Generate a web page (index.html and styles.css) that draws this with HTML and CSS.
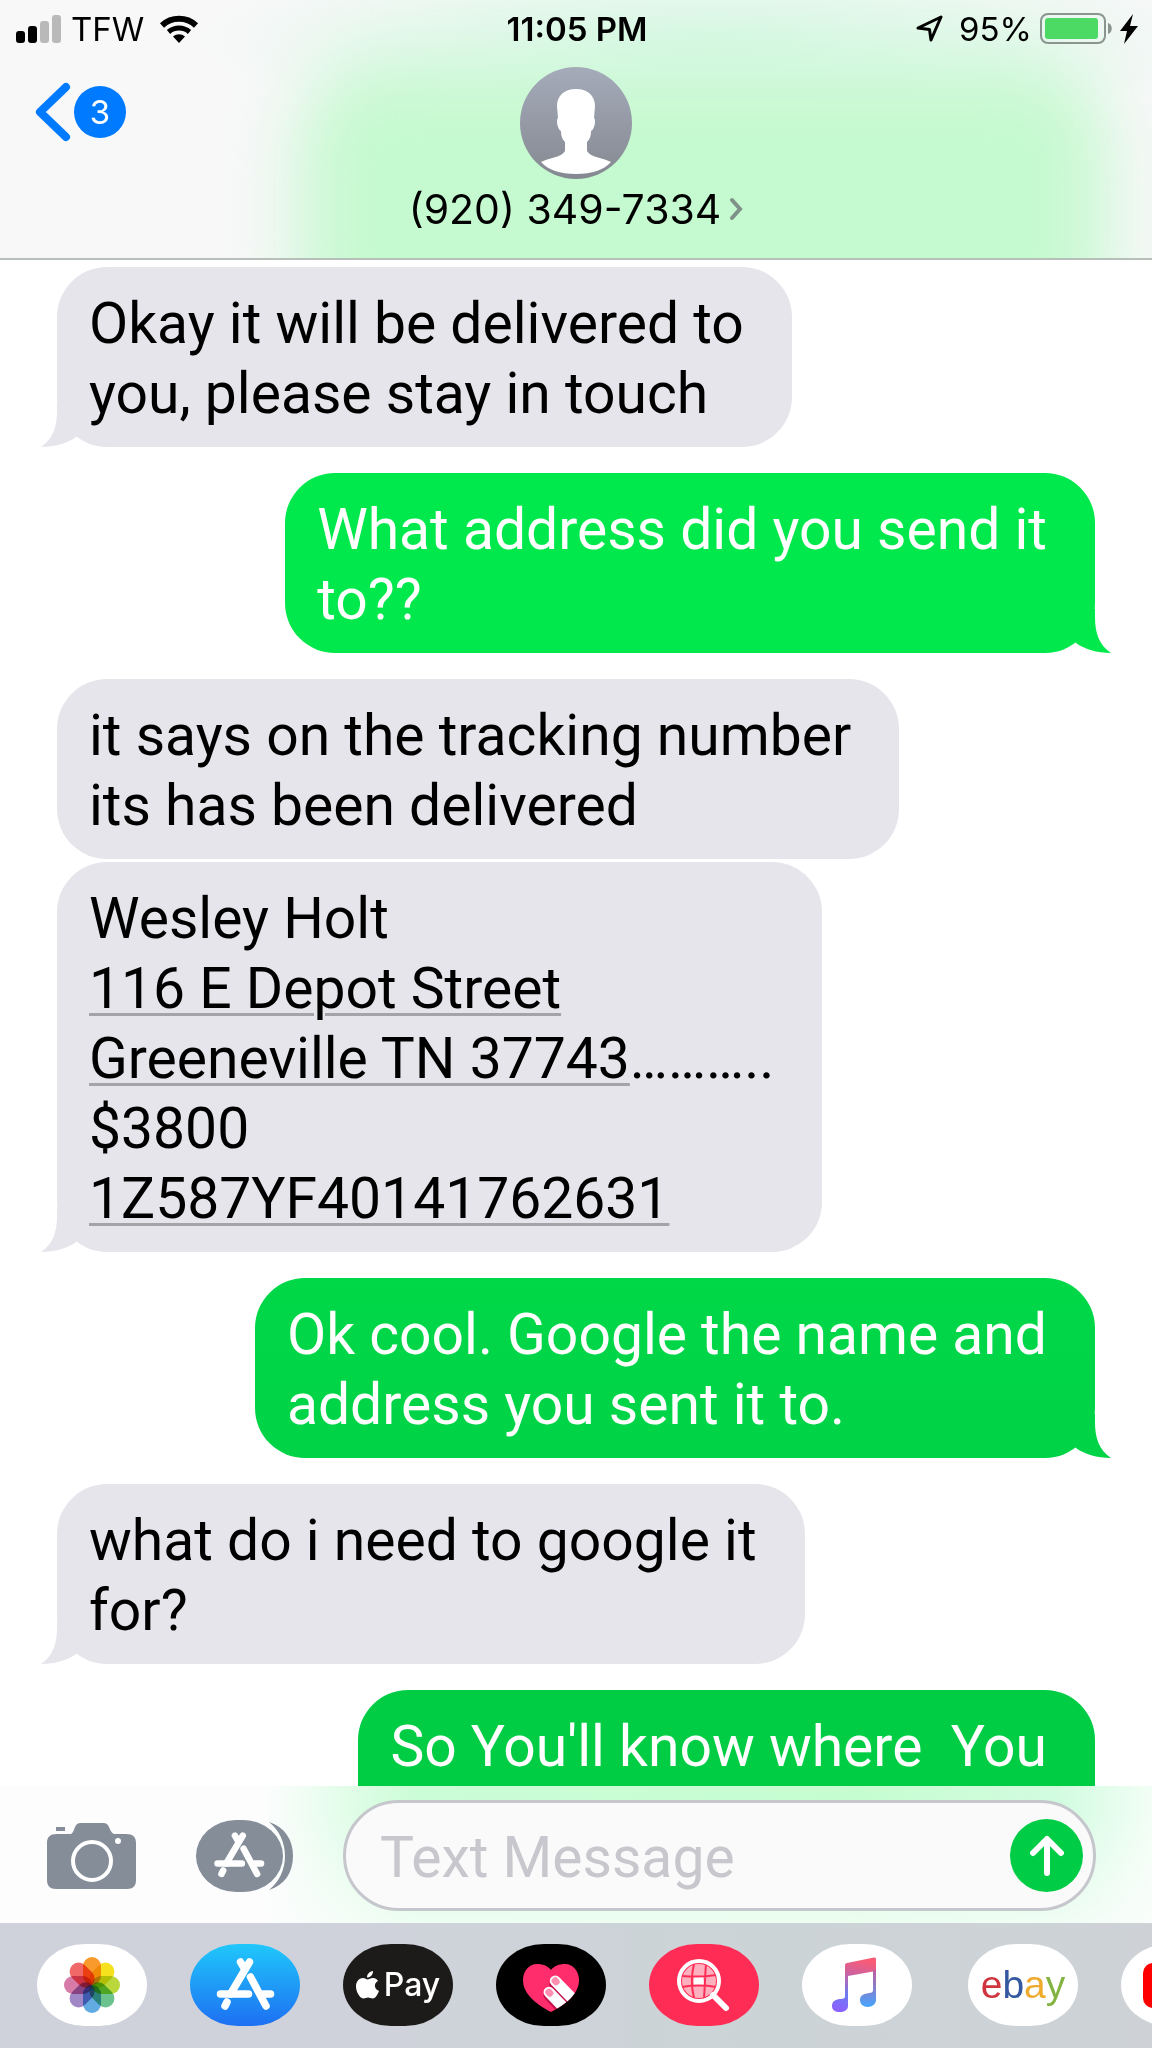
FILE: index.html
```html
<!DOCTYPE html>
<html lang="en">
<head>
  <meta charset="UTF-8">
  <meta name="viewport" content="width=device-width, initial-scale=1">
  <title>Messages</title>
  <link rel="stylesheet" href="styles.css">
</head>
<body>
<header class="header">
  <div class="status-bar">
    <div class="status-left">
      <svg width="45" height="28" viewBox="0 0 45 28">
        <rect x="0" y="16" width="9" height="12" rx="3"/>
        <rect x="12" y="11" width="9" height="17" rx="3"/>
        <rect x="24" y="6" width="9" height="22" rx="3" fill="#b9b9ba"/>
        <rect x="36" y="0" width="9" height="28" rx="3" fill="#b9b9ba"/>
      </svg>
      <span class="carrier">TFW</span>
      <svg class="wifi" width="40" height="28" viewBox="0 0 40 28">
        <path d="M3 10.500A25 25 0 0 1 37 10.500" fill="none" stroke="#000" stroke-width="6"/>
        <path d="M9.500 17A16 16 0 0 1 30.500 17" fill="none" stroke="#000" stroke-width="5"/>
        <path d="M20 28l-6-6.500a9 9 0 0 1 12 0z"/>
      </svg>
    </div>
    <time class="clock">11:05 PM</time>
    <div class="status-right">
      <svg width="27" height="28" viewBox="0 0 27 28">
        <path d="M25 2L15 25l-1.500-10.500L2 13z" fill="none" stroke="#000" stroke-width="3" stroke-linejoin="round"/>
      </svg>
      <span class="percent">95%</span>
      <svg width="73" height="32" viewBox="0 0 73 32">
        <rect x="1" y="1" width="64" height="29" rx="7" fill="none" stroke="#8a9590" stroke-width="2"/>
        <rect x="5" y="5" width="53" height="21" rx="3" fill="#4cd964"/>
        <path d="M68 10c5 1 5 10 0 11z" fill="#8a9590"/>
      </svg>
      <svg class="bolt" width="18" height="30" viewBox="0 0 18 30">
        <path d="M13 0L0 17h7L4 30 18 12h-8z"/>
      </svg>
    </div>
  </div>
  <nav class="nav">
    <a class="back" href="#" aria-label="Back to conversations">
      <svg width="36" height="60" viewBox="0 0 36 60">
        <path d="M31 5L5 30l26 25" fill="none" stroke="#007aff" stroke-width="8" stroke-linecap="round" stroke-linejoin="round"/>
      </svg>
      <span class="badge">3</span>
    </a>
    <a class="contact" href="#">
      <svg class="avatar" width="112" height="112" viewBox="0 0 112 112">
        <defs>
          <linearGradient id="avatarFill" x1="0" y1="0" x2="0" y2="1">
            <stop offset="0" stop-color="#a5abb9"/>
            <stop offset="1" stop-color="#848991"/>
          </linearGradient>
        </defs>
        <circle cx="56" cy="56" r="56" fill="url(#avatarFill)"/>
        <path d="M56 22C44 22 37 29 37 39l1 12c-2 1-1 11 3 13 0 5 1 8 4 11v9c-4 7-15 6-24 11 7 8 19 12 35 12s28-4 35-12c-9-5-20-4-24-11v-9c3-3 4-6 4-11 4-2 5-12 3-13l1-12c0-10-7-17-19-17z" fill="#fff"/>
      </svg>
      <span class="contact-name">(920) 349-7334
        <svg width="14" height="24" viewBox="0 0 14 24">
          <path d="M3 3l8 9-8 9" fill="none" stroke="#7f9188" stroke-width="4" stroke-linecap="round"/>
        </svg>
      </span>
    </a>
  </nav>
</header>

<main class="messages">
  <p class="bubble received tail">Okay it will be delivered to<br>you, please stay in touch</p>
  <p class="bubble sent tail">What address did you send it<br>to??</p>
  <p class="bubble received">it says on the tracking number<br>its has been delivered</p>
  <p class="bubble received tail grouped">Wesley Holt<br><a href="#">116 E Depot Street</a><br><a href="#">Greeneville TN 37743</a>………..<br>$3800<br><a href="#">1Z587YF40141762631</a></p>
  <p class="bubble sent tail">Ok cool. Google the name and<br>address you sent it to.</p>
  <p class="bubble received tail">what do i need to google it<br>for?</p>
  <p class="bubble sent continued">So You'll know where&nbsp; You</p>
</main>

<form class="composer">
  <button class="icon-button" type="button" aria-label="Camera">
    <svg width="90" height="68" viewBox="0 0 90 68">
      <path d="M10 12h14c4-2 3-11 9-11h24c6 0 5 9 10 11h12c7 0 10 3 10 9v37c0 6-3 9-9 9H9c-6 0-9-3-9-9V21c0-6 3-9 10-9z" fill="#858d99"/>
      <rect x="9" y="5" width="9" height="4" fill="#858d99"/>
      <circle cx="45" cy="39" r="19" fill="none" stroke="#fff" stroke-width="4"/>
      <circle cx="71" cy="19" r="3" fill="#fff"/>
    </svg>
  </button>
  <button class="icon-button" type="button" aria-label="Apps">
    <svg width="98" height="72" viewBox="0 0 98 72">
      <path d="M73 2c16 5 24 18 24 34S89 65 73 70c10-8 16-20 16-34S83 10 73 2z" fill="#858d99"/>
      <rect width="87" height="72" rx="40" ry="36" fill="#858d99"/>
      <use href="#storeMark" transform="translate(-5 0) scale(.87)"/>
    </svg>
  </button>
  <div class="field">
    <input class="message-input" type="text" placeholder="Text Message" aria-label="Text Message">
    <button class="send" type="submit" aria-label="Send">
      <svg width="36" height="42" viewBox="0 0 36 42">
        <path d="M18 38V5M4 18L18 4l14 14" fill="none" stroke="#fff" stroke-width="6" stroke-linecap="round" stroke-linejoin="round"/>
      </svg>
    </button>
  </div>
</form>

<nav class="app-strip" aria-label="Message apps">
  <button class="app" type="button" aria-label="Photos">
    <svg class="petals" width="110" height="82" viewBox="0 0 110 82">
      <defs><rect id="petal" x="46" y="13" width="18" height="28" rx="9"/></defs>
      <use href="#petal" fill="#f99a2c"/>
      <use href="#petal" fill="#f5e11d" transform="rotate(45 55 41)"/>
      <use href="#petal" fill="#bad83c" transform="rotate(90 55 41)"/>
      <use href="#petal" fill="#6cc28c" transform="rotate(135 55 41)"/>
      <use href="#petal" fill="#62aae2" transform="rotate(180 55 41)"/>
      <use href="#petal" fill="#a088c6" transform="rotate(225 55 41)"/>
      <use href="#petal" fill="#d77ca8" transform="rotate(270 55 41)"/>
      <use href="#petal" fill="#f16868" transform="rotate(315 55 41)"/>
    </svg>
  </button>
  <button class="app app-store" type="button" aria-label="App Store">
    <svg width="110" height="82" viewBox="0 0 110 82">
      <defs>
        <g id="storeMark" fill="none" stroke="#fff" stroke-width="7.500" stroke-linecap="round">
          <path d="M59.500 18L40.500 50M50.500 18l4 7M37 58l-2 4M60.500 33L76 62"/>
          <path d="M30.500 50h28M73 50h7.500"/>
        </g>
      </defs>
      <use href="#storeMark"/>
    </svg>
  </button>
  <button class="app app-pay" type="button" aria-label="Apple Pay">
    <svg width="23" height="28" viewBox="0 0 23 28">
      <path d="M17 0c0 4-2.500 6.500-6 6.500C11 3 13.500 .5 17 0zM11.500 8.500C13 8.500 14.500 7 17 7c2 0 4 1 5 3-4.500 2.500-4 8 1 10-1.500 4-4 7.500-6 7.500S13.500 26.500 12 26.500 9 27.500 7.500 27.500C4 27.500 0 21 0 15.500 0 10 3.500 7 7 7c2 0 3.500 1.500 4.500 1.500z" fill="#fff"/>
    </svg>
    <span>Pay</span>
  </button>
  <button class="app app-touch" type="button" aria-label="Digital Touch">
    <svg width="110" height="82" viewBox="0 0 110 82">
      <defs>
        <clipPath id="heart"><path d="M55 68C42 61 27 51 27 36c0-9 6-16 14-16 6 0 11 2 14 6 3-4 8-6 14-6 8 0 14 7 14 16 0 15-15 25-28 32z"/></clipPath>
      </defs>
      <g clip-path="url(#heart)">
        <rect width="110" height="82" fill="#ff2d6b"/>
        <g transform="rotate(-44 60 37)">
          <path d="M54 37a6 6 0 0 1 12 0v40H54z" fill="#c3124c" transform="translate(-3 2)"/>
          <rect x="54" y="31" width="11" height="50" rx="5.500" fill="#fff"/>
          <rect x="56" y="33" width="7" height="8" rx="3" fill="#ff8fb0"/>
        </g>
        <g transform="rotate(-44 53 49)">
          <rect x="46" y="45" width="11" height="50" rx="5.500" fill="#c3124c"/>
          <rect x="48" y="43" width="11" height="50" rx="5.500" fill="#fff"/>
          <rect x="50" y="45" width="7" height="8" rx="3" fill="#ff8fb0"/>
        </g>
      </g>
    </svg>
  </button>
  <button class="app app-images" type="button" aria-label="Images">
    <svg width="110" height="82" viewBox="0 0 110 82">
      <circle cx="50" cy="37" r="17" fill="#ffb0bf"/>
      <path d="M45 33l9-1 1 9-10 1z" fill="#fff"/>
      <path d="M45 20c-3 12-3 22 0 34M57 20c-1 12-1 22-2 34M33 32c12 1 22 1 34-1M33 43c12-2 22-2 34 0" fill="none" stroke="#ff2d55" stroke-width="2"/>
      <circle cx="50" cy="37" r="20" fill="none" stroke="#fff" stroke-width="4"/>
      <path d="M64 51l13 13" stroke="#fff" stroke-width="6" stroke-linecap="round"/>
    </svg>
  </button>
  <button class="app" type="button" aria-label="Music">
    <svg width="110" height="82" viewBox="0 0 110 82">
      <defs>
        <linearGradient id="noteFill" x1=".6" y1="0" x2=".4" y2="1">
          <stop offset="0" stop-color="#fb5b74"/>
          <stop offset=".3" stop-color="#d0619c"/>
          <stop offset=".7" stop-color="#6c7bf0"/>
          <stop offset="1" stop-color="#8a62ff"/>
        </linearGradient>
        <linearGradient id="noteRight" x1="0" y1="0" x2="0" y2="1">
          <stop offset="0" stop-color="#c05c9c"/>
          <stop offset="1" stop-color="#45a5ff"/>
        </linearGradient>
      </defs>
      <path d="M43 21c0-1 1-2 2-2l27-5.500c1 0 2 0 2 1.500V27l-28 5v30c0 4-4 6-8 6-5 0-8-2-8-6 0-5 4-7 9-7 3 0 4-1 4-3z" fill="url(#noteFill)"/>
      <path d="M71 26h3v30c0 4-4 7-8 7-5 0-8-3-8-7 0-5 4-6 9-7 3 0 4-1 4-3z" fill="url(#noteRight)"/>
    </svg>
  </button>
  <span class="divider"></span>
  <button class="app app-ebay" type="button"><span class="e">e</span><span class="b">b</span><span class="a">a</span><span class="y">y</span></button>
  <button class="app" type="button" aria-label="YouTube">
    <svg width="110" height="82" viewBox="0 0 110 82">
      <rect x="22" y="19" width="66" height="45" rx="10" fill="#f00"/>
      <path d="M49 31v21l18-10.500z" fill="#fff"/>
    </svg>
  </button>
</nav>
</body>
</html>
```
FILE: styles.css
```css
* { box-sizing: border-box; }

body {
  margin: 0;
  height: 100vh;
  display: flex;
  flex-direction: column;
  overflow: hidden;
  background: #fff;
  color: #000;
  font-family: Inter, "Liberation Sans", sans-serif;
}

button {
  border: 0;
  padding: 0;
  background: none;
  font-family: inherit;
  cursor: pointer;
}

svg { display: block; flex: none; }

/* header */
.header {
  position: relative;
  overflow: hidden;
  flex: none;
  height: 260px;
  background: #f8f8f9;
  border-bottom: 2px solid #b6bfba;
}
/* green bubble showing through the frosted bar */
.header::before {
  content: "";
  position: absolute;
  top: 60px;
  left: 26%;
  right: 4%;
  height: 300px;
  border-radius: 80px;
  background: #c5f9cf;
  filter: blur(36px);
}
.header::after {
  content: "";
  position: absolute;
  top: 0;
  left: 0;
  right: 0;
  height: 100px;
  background: radial-gradient(ellipse 45% 100% at 62% 40%, rgba(197, 248, 215, .6), transparent);
}
.status-bar,
.nav {
  position: relative;
  z-index: 1;
}
.status-bar {
  display: grid;
  grid-template-columns: 1fr auto 1fr;
  align-items: center;
  height: 58px;
  padding: 0 14px 0 16px;
  font-size: 33px;
  line-height: 58px;
}
.status-left,
.status-right {
  display: flex;
  align-items: center;
}
.status-right { justify-content: flex-end; }
.carrier { margin: 0 15px 0 10px; }
.clock { font-weight: 600; }
.percent { margin: 0 8px 0 16px; }
.bolt { margin-left: 7px; }

.nav {
  display: grid;
  grid-template-columns: 1fr auto 1fr;
  padding: 9px 35px 0;
}
.nav a { color: inherit; text-decoration: none; }
.back {
  display: flex;
  align-items: center;
  height: 60px;
  margin-top: 15px;
}
.badge {
  width: 52px;
  height: 52px;
  margin-left: 3px;
  border-radius: 50%;
  background: #007aff;
  color: #fff;
  font-size: 33px;
  line-height: 52px;
  text-align: center;
}
.contact {
  display: flex;
  flex-direction: column;
  align-items: center;
}
.contact-name {
  display: flex;
  align-items: center;
  gap: 8px;
  margin-top: 6px;
  font-size: 41px;
  line-height: 48px;
}

/* conversation */
.messages {
  flex: 1;
  min-height: 0;
  overflow: hidden;
  display: flex;
  flex-direction: column;
  align-items: flex-start;
  padding: 7px 57px 0;
}
.bubble {
  position: relative;
  flex: none;
  margin: 0 0 26px;
  padding: 22px 48px 18px 32px;
  border-radius: 50px;
  font-family: Roboto, Inter, sans-serif;
  font-size: 57px;
  line-height: 70px;
  white-space: nowrap;
}
.received { background: #e5e5eb; }
.sent {
  align-self: flex-end;
  background: linear-gradient(#00e94c 23%, #00e84b 32%, #00d848 62%, #00cc44 83%) fixed;
  color: #fff;
}
.grouped { margin-top: -23px; }
.continued { height: 180px; }
.bubble a {
  color: inherit;
  text-decoration: underline 3px #a3a3a8;
  text-underline-offset: 5px;
}
.tail::after {
  content: "";
  position: absolute;
  bottom: 0;
  width: 50px;
  height: 44px;
  background: inherit;
}
.received.tail::after {
  left: -16px;
  clip-path: path("M16 0V8C16 24 12 36 0 44C14 44 27 40 35 34L50 10V0Z");
}
.sent.tail::after {
  right: -16px;
  clip-path: path("M34 0V8C34 24 38 36 50 44C36 44 23 40 15 34L0 10V0Z");
}

/* composer */
.composer {
  flex: none;
  display: flex;
  align-items: center;
  height: 137px;
  padding: 2px 56px 0 47px;
  background:
    linear-gradient(rgba(253, 253, 254, 0) 20%, rgba(253, 253, 254, .7)),
    linear-gradient(90deg, transparent 23%, #cbfdd7 36%, #c6fdd0 75%, #d2fce0 92%, #f3fef6),
    #fdfdfe;
}
.icon-button { margin-right: 59px; }
.icon-button + .icon-button { margin-right: 49px; }
.field {
  flex: 1;
  min-width: 0;
  display: flex;
  align-items: center;
  height: 111px;
  padding: 0 10px 0 34px;
  border: 3px solid #c6c7cc;
  border-radius: 56px;
  background: #fafafa;
}
.message-input {
  flex: 1;
  min-width: 0;
  border: 0;
  padding: 4px 0 0;
  background: none;
  font-family: Roboto, Inter, sans-serif;
  font-size: 57px;
  line-height: 70px;
}
.message-input::placeholder { color: #c7c7cd; opacity: 1; }
.send {
  flex: none;
  display: flex;
  align-items: center;
  justify-content: center;
  width: 73px;
  height: 73px;
  border-radius: 50%;
  background: #00cc45;
}

/* app strip */
.app-strip {
  flex: none;
  display: flex;
  align-items: center;
  gap: 43px;
  height: 125px;
  padding: 0 0 2px 37px;
  overflow: hidden;
  background: linear-gradient(90deg, #d0d2db 30%, #ccd4d7 60%, #ced2d7);
}
.app {
  flex: none;
  display: flex;
  align-items: center;
  justify-content: center;
  width: 110px;
  height: 82px;
  border-radius: 48px / 41px;
  background: #fff;
  overflow: hidden;
}
.petals use { mix-blend-mode: multiply; }
.app-store { background: linear-gradient(#20c8fb, #1d6ff2); }
.app-pay {
  gap: 5px;
  background: #1c1b19;
  color: #fff;
  font-size: 32px;
  font-weight: 500;
}
.app-touch { background: #000; }
.app-images { background: #ff2d55; }
.divider {
  width: 3px;
  height: 70px;
  margin: 0 -15px;
  background: #afb4b8;
}
.app-ebay {
  font-family: "Liberation Sans", sans-serif;
  font-size: 39px;
}
.app-ebay .e { color: #d0343f; }
.app-ebay .b { color: #34589f; }
.app-ebay .a { color: #eeab2d; }
.app-ebay .y { color: #83b441; }
```
